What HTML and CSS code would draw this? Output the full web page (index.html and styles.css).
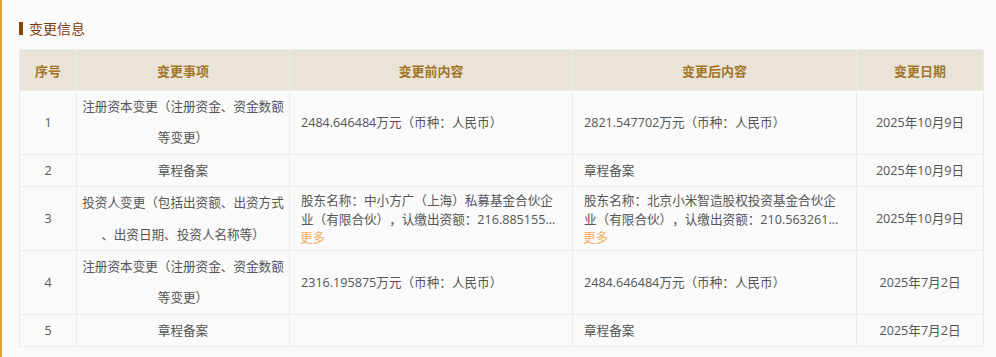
FILE: index.html
```html
<!DOCTYPE html>
<html lang="zh-CN">
<head>
<meta charset="utf-8">
<title>变更信息</title>
<link rel="stylesheet" href="styles.css">
</head>
<body>
<div class="panel">
  <h3 class="title"><span class="bar"></span>变更信息</h3>
  <table class="changes">
    <colgroup>
      <col class="w-no"><col class="w-item"><col class="w-before"><col class="w-after"><col class="w-date">
    </colgroup>
    <thead>
      <tr><th>序号</th><th>变更事项</th><th>变更前内容</th><th>变更后内容</th><th>变更日期</th></tr>
    </thead>
    <tbody>
      <tr>
        <td class="c">1</td>
        <td class="item">注册资本变更（注册资金、资金数额等变更）</td>
        <td class="txt">2484.646484万元（币种：人民币）</td>
        <td class="txt">2821.547702万元（币种：人民币）</td>
        <td class="c">2025年10月9日</td>
      </tr>
      <tr>
        <td class="c">2</td>
        <td class="item">章程备案</td>
        <td class="txt"></td>
        <td class="txt">章程备案</td>
        <td class="c">2025年10月9日</td>
      </tr>
      <tr>
        <td class="c">3</td>
        <td class="item">投资人变更（包括出资额、出资方式、出资日期、投资人名称等）</td>
        <td class="txt"><div class="clamp">股东名称：中小方广（上海）私募基金合伙企业（有限合伙），认缴出资额：216.885155万元（币种：人民币）</div><a class="more" href="#">更多</a></td>
        <td class="txt"><div class="clamp">股东名称：北京小米智造股权投资基金合伙企业（有限合伙），认缴出资额：210.563261万元（币种：人民币）</div><a class="more" href="#">更多</a></td>
        <td class="c">2025年10月9日</td>
      </tr>
      <tr>
        <td class="c">4</td>
        <td class="item">注册资本变更（注册资金、资金数额等变更）</td>
        <td class="txt">2316.195875万元（币种：人民币）</td>
        <td class="txt">2484.646484万元（币种：人民币）</td>
        <td class="c">2025年7月2日</td>
      </tr>
      <tr>
        <td class="c">5</td>
        <td class="item">章程备案</td>
        <td class="txt"></td>
        <td class="txt">章程备案</td>
        <td class="c">2025年7月2日</td>
      </tr>
    </tbody>
  </table>
</div>
</body>
</html>
```
FILE: styles.css
```css
html, body {
  margin: 0;
  padding: 0;
  background: #fafafa;
}
body {
  font-family: "Open Sans", "Noto Sans CJK SC", sans-serif;
  font-size: 12.6px;
  color: #555;
  text-spacing-trim: space-all;
}
.panel {
  border-left: 2px solid #d9a031;
  padding: 18px 0 10px 17px;
  min-height: 328px;
  box-sizing: border-box;
}
.title {
  margin: 0 0 11px 0;
  display: flex;
  align-items: center;
  height: 20px;
  font-size: 14px;
  font-weight: normal;
  color: #7a3f0c;
  font-family: "Noto Sans CJK SC", sans-serif;
}
.bar {
  width: 4px;
  height: 13px;
  background: #8a4406;
  margin-right: 6px;
}
.changes {
  border-collapse: collapse;
  table-layout: fixed;
  width: 964px;
}
.w-no { width: 57px; }
.w-item { width: 213px; }
.w-before { width: 283px; }
.w-after { width: 284px; }
.w-date { width: 127px; }
.changes th,
.changes td {
  border: 1px solid #ebebeb;
  vertical-align: middle;
}
.changes th {
  background: #e9e3d8;
  color: #a37629;
  font-weight: bold;
  font-size: 13px;
  height: 40px;
  padding: 0;
  text-align: center;
  font-family: "Noto Sans CJK SC", sans-serif;
}
.changes td {
  line-height: 31.4px;
  padding: 0 10px;
}
.changes td.c {
  text-align: center;
  padding: 0 4px;
}
.changes td.item {
  text-align: center;
  padding: 0 5px;
  line-break: anywhere;
}
.changes td.txt {
  padding: 0 10px 0 11px;
}
.clamp {
  line-height: 19px;
  display: -webkit-box;
  -webkit-box-orient: vertical;
  -webkit-line-clamp: 2;
  overflow: hidden;
}
.more {
  display: block;
  line-height: 17px;
  margin-left: -1px;
  color: #f7ac62;
  text-decoration: none;
}
```
